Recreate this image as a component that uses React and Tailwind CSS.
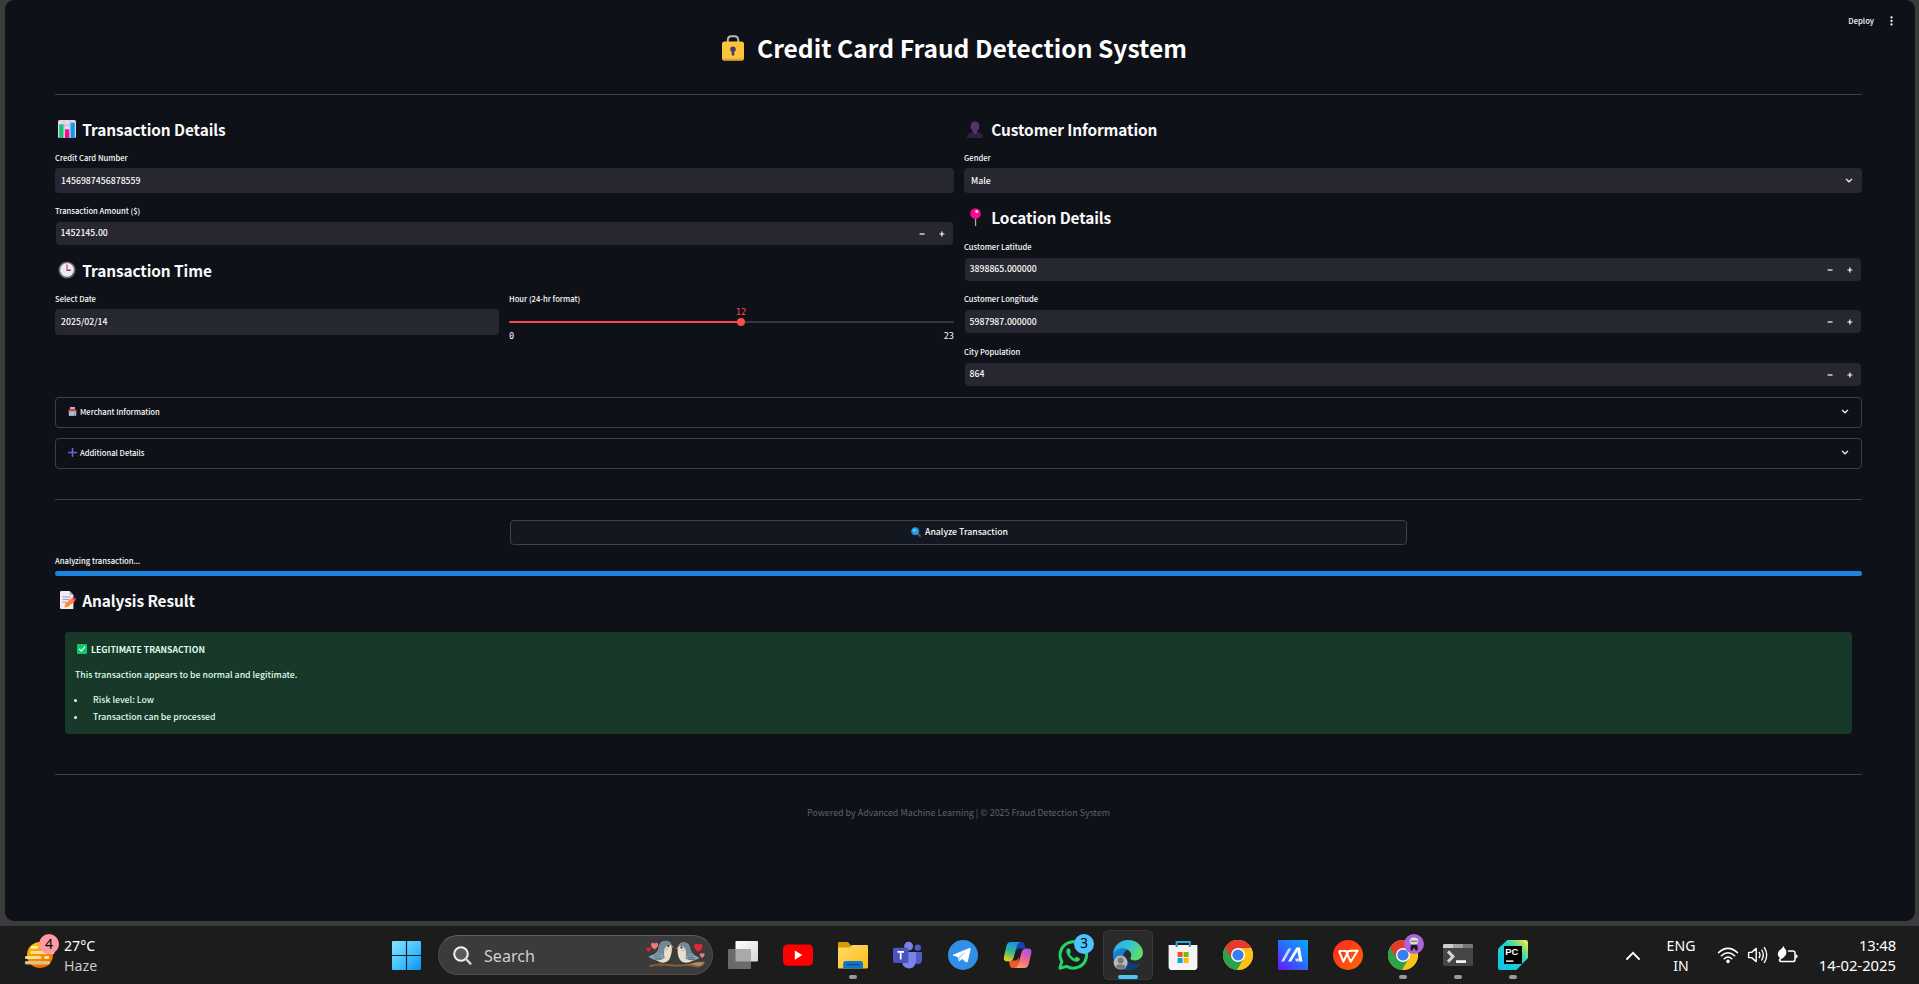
import React from "react";

const SANS = "font-['Noto_Sans_CJK_SC','Noto_Sans',sans-serif]";
const UI = "font-['Noto_Sans','Open_Sans',sans-serif]";

/* ---------- pictograms used in the page ---------- */

const LockIcon = () => (
  <svg className="w-[22px] h-[26px] shrink-0" viewBox="0 0 22 26">
    <path d="M5.8 9V5.2Q5.8 1.2 9.4 1.2H12.6Q16.2 1.2 16.2 5.2V9" fill="none" stroke="#b9b6be" strokeWidth="2" />
    <rect x="0" y="6.5" width="22" height="19" rx="2.6" fill="#fcc33c" />
    <rect x="1" y="23.5" width="20" height="2" rx="1" fill="#e0a63c" />
    <circle cx="11" cy="14.2" r="2.7" fill="#433b6b" />
    <rect x="9.7" y="14" width="2.6" height="6.6" rx="1.2" fill="#433b6b" />
  </svg>
);

const ChartIcon = () => (
  <svg className="w-[18px] h-[18px] shrink-0" viewBox="0 0 18 18">
    <rect x="0" y="0" width="18" height="18" rx="1.6" fill="#e5d9ee" />
    <path d="M0 5.4H18M0 10.2H18M6 0V18M12 0V18" stroke="#c2b4d2" strokeWidth="0.8" />
    <rect x="1.2" y="4.4" width="4.2" height="13.6" fill="#0fc46c" />
    <rect x="7" y="9.4" width="4.2" height="8.6" fill="#f70a8d" />
    <rect x="12.6" y="2.6" width="4.2" height="15.4" fill="#0a9cf0" />
  </svg>
);

const ClockIcon = () => (
  <svg className="w-[18px] h-[18px] shrink-0" viewBox="0 0 18 18">
    <circle cx="9" cy="9" r="8.6" fill="#6a6670" />
    <circle cx="9" cy="8.8" r="6.9" fill="#efeaf1" />
    <path d="M9 3.6V9.2" stroke="#ef3f78" strokeWidth="1.3" />
    <path d="M8.6 9.3H12.8" stroke="#5a5560" strokeWidth="1.5" />
  </svg>
);

const PersonIcon = () => (
  <svg className="w-[16px] h-[17px] shrink-0" viewBox="0 0 16 17">
    <path d="M0 17Q.2 11.4 5.4 11.2L8 13L10.6 11.2Q15.8 11.4 16 17Z" fill="#331f44" />
    <path d="M8 .4C5 .4 3.5 2.6 3.7 5.4C3.2 6 3.6 7.4 4.3 7.7C4.7 9.4 5.4 10.2 6 10.7V12L8 13.6L10 12V10.7C10.6 10.2 11.3 9.4 11.7 7.7C12.4 7.4 12.8 6 12.3 5.4C12.5 2.6 11 .4 8 .4Z" fill="#52346b" />
  </svg>
);

const PinIcon = () => (
  <svg className="w-[11px] h-[18px] shrink-0" viewBox="0 0 11 18">
    <rect x="4.9" y="9" width="1.3" height="9" fill="#a8a3ad" />
    <circle cx="5.5" cy="5.5" r="5.3" fill="#f70a8d" />
    <ellipse cx="6.8" cy="3.5" rx="1.6" ry="1.5" fill="#ffd3ea" />
  </svg>
);

const MemoIcon = () => (
  <svg className="w-[16px] h-[18px] shrink-0" viewBox="0 0 16 18">
    <path d="M1.2 0H9.6L13.4 4V18H1.2Q0 18 0 16.8V1.2Q0 0 1.2 0Z" fill="#f2eaf5" />
    <path d="M9.6 0V4H13.4Z" fill="#b8a8cc" />
    <path d="M2.6 6H10.6M2.6 8.6H9.6M2.6 11.2H6.8" stroke="#a493bd" strokeWidth="1" />
    <path d="M4.4 16.4L5.4 12.6L12 6.9L15 10L8.2 15.8Z" fill="#ff8a2b" />
    <path d="M12 6.9L13.3 5.9Q16.4 6.4 16 9.1L15 10Z" fill="#f0277d" />
  </svg>
);

const StoreIcon = () => (
  <svg className="w-[9px] h-[9px] shrink-0" viewBox="0 0 9 9">
    <rect x="2" y="0" width="5" height="2.4" fill="#b9b3c2" />
    <rect x=".8" y="4" width="7.4" height="4.8" fill="#b7cbe0" />
    <path d="M1 2.2H8L9 4.5H0Z" fill="#e2453f" />
    <rect x="1.6" y="5.8" width="3" height="1.6" fill="#8fbbe0" />
    <rect x="5.8" y="5.8" width="1.4" height="3" fill="#8e8aa6" />
  </svg>
);

const PlusEmoji = () => (
  <svg className="w-[9px] h-[9px] shrink-0" viewBox="0 0 9 9">
    <path d="M4.5 .4V8.6M.4 4.5H8.6" stroke="#7a5bd0" strokeWidth="1.6" strokeLinecap="round" />
  </svg>
);

const LensIcon = () => (
  <svg className="w-[10px] h-[10px] shrink-0" viewBox="0 0 10 10">
    <path d="M6 6L9 9" stroke="#5d4a86" strokeWidth="1.9" strokeLinecap="round" />
    <circle cx="4.2" cy="4.2" r="3.7" fill="#1aa6f2" stroke="#3c6fae" strokeWidth=".9" />
    <circle cx="3.2" cy="3.2" r="1" fill="#8fdcff" />
  </svg>
);

const CheckEmoji = () => (
  <svg className="w-[10px] h-[10px] shrink-0" viewBox="0 0 10 10">
    <rect width="10" height="10" rx="1.2" fill="#0fc968" />
    <path d="M2.3 5.2L4.2 7.2L7.8 2.8" fill="none" stroke="#fff" strokeWidth="1.2" strokeLinecap="round" strokeLinejoin="round" />
  </svg>
);

const Chevron = () => (
  <svg className="w-[8px] h-[5px] shrink-0" viewBox="0 0 8 5">
    <path d="M1 .9L4 3.8L7 .9" fill="none" stroke="#fafafa" strokeWidth="1.25" />
  </svg>
);

/* ---------- form pieces ---------- */

const Heading = ({ icon, className = "", children }) => (
  <div className={"flex items-center h-6 " + className}>
    <span className="flex w-[27.3px] justify-start">{icon}</span>
    <h3 className="text-[15.4px] leading-6 font-bold tracking-[-0.006em] text-[#fafafa] whitespace-nowrap">{children}</h3>
  </div>
);

const Label = ({ className = "", children }) => (
  <div className={"h-[14px] leading-[14px] text-[7.64px] font-medium text-[#fafafa] whitespace-nowrap " + className}>{children}</div>
);

const NumberInput = ({ className = "", value, pad = "pb-[2px]" }) => (
  <div className={"flex items-center h-[23px] mx-px rounded-[4px] bg-[#262730] pl-[4.5px] pr-[8px] " + className}>
    <span className={"text-[8.73px] leading-[12px] font-medium text-[#fafafa] " + pad}>{value}</span>
    <svg className="ml-auto w-[26px] h-[6px]" viewBox="0 0 26 6">
      <path d="M.6 3H5.6" stroke="#fafafa" strokeWidth="1.2" />
      <path d="M20.4 3H25.4M22.9 .5V5.5" stroke="#fafafa" strokeWidth="1.2" />
    </svg>
  </div>
);

const Rule = ({ className = "" }) => <div className={"h-px bg-[#3d4044] " + className} />;

const Expander = ({ icon, className = "", children }) => (
  <div className={"flex items-center h-[31px] rounded-[4px] border border-[#3d4044] pl-[12px] pr-[12px] pb-[2px] " + className}>
    {icon}
    <span className="ml-[3px] text-[7.64px] leading-[12px] font-medium text-[#fafafa]">{children}</span>
    <span className="ml-auto">
      <Chevron />
    </span>
  </div>
);

/* ---------- taskbar icons ---------- */

const WindowsLogo = () => (
  <svg className="w-[29px] h-[29px]" viewBox="0 0 29 29">
    <defs>
      <linearGradient id="win" x1="0" y1="0" x2="1" y2="1">
        <stop offset="0" stopColor="#8be2ff" />
        <stop offset=".5" stopColor="#45c6ff" />
        <stop offset="1" stopColor="#0b90f5" />
      </linearGradient>
    </defs>
    <path d="M1 0H13.9V13.9H0V1Q0 0 1 0ZM15.1 0H28Q29 0 29 1V13.9H15.1ZM0 15.1H13.9V29H1Q0 29 0 28ZM15.1 15.1H29V28Q29 29 28 29H15.1Z" fill="url(#win)" />
  </svg>
);

const Heart = ({ x, y, s, fill }) => (
  <path transform={`translate(${x} ${y}) scale(${s})`} d="M0 3.4C-4.6 .4-3.4-3 -1.4-2.8C-.6-2.8 0-2 0-1.6C0-2 .6-2.8 1.4-2.8C3.4-3 4.6 .4 0 3.4Z" fill={fill} />
);

const Birds = () => (
  <svg className="w-[60px] h-[30px]" viewBox="0 0 60 30">
    <path d="M3 25.5Q12 22.6 26 24.4Q40 25.4 50 22L59 21.6Q58.4 26 52 27.4Q46 26.2 40 25.8Q30 27.2 20 25.4Q12 25 4 27Z" fill="#8d643f" />
    <path d="M44 24Q51 21.8 58 22.4L54 26Z" fill="#b98c5c" />
    <path d="M15 22L8 26M20 24L14 27M33 24L29 27" stroke="#75502f" strokeWidth="1" />
    <path d="M12.6 9Q13 1 19.6 1Q25.6 1 25.8 7Q26.6 13 23 20Q19 24 14 22L3 17Q10 15 12.6 9Z" fill="#e6dfcd" />
    <path d="M12.8 8.4Q13.4 .8 19.6 .8Q24.8 .8 25.6 5.4Q20.6 4 18.4 9Q17.6 14 18.6 18Q12 23.4 2 16.4Q10.2 15 12.8 8.4Z" fill="#6f8998" />
    <path d="M8.6 14Q15 11 18 17Q12 22 3 16.6Z" fill="#8fa6b4" />
    <path d="M8.4 15.2L14.6 14.4M7.6 17L15.6 16.8M9.4 18.8L15 18.6" stroke="#4a6373" strokeWidth=".7" />
    <circle cx="22.4" cy="6" r="1" fill="#1c1c22" />
    <circle cx="20.8" cy="8.8" r="1.5" fill="#f3b3a5" />
    <path d="M25.4 5.4L27.8 7L25.4 8Z" fill="#d99545" />
    <path d="M44.4 10Q44 3 37.8 2.4Q32.4 2.4 32 8Q30.6 14 34 20Q37 24 44 22L53 18Q47 16 44.4 10Z" fill="#e6dfcd" />
    <path d="M44.4 9.6Q44 2.4 37.8 2.2Q33.2 2.2 32.2 6.4Q37 5 39.6 9.4Q40.4 15 39.6 18.4Q46 22.8 54 18Q47 16 44.4 9.6Z" fill="#6f8998" />
    <path d="M40 17Q42 12.4 48 15L53 18Q46 21 40 17Z" fill="#8fa6b4" />
    <path d="M41.6 15.4L47.6 16M42 17.4L49 17.8M43 19.2L48 19.2" stroke="#4a6373" strokeWidth=".7" />
    <circle cx="35.4" cy="7.4" r="1" fill="#1c1c22" />
    <circle cx="37" cy="10" r="1.5" fill="#f3b3a5" />
    <path d="M32.4 6.8L30 8.4L32.4 9.4Z" fill="#d99545" />
    <Heart x={8.6} y={5.8} s={1.1} fill="#f4787a" />
    <Heart x={2.6} y={9.4} s={0.7} fill="#e0262f" />
    <Heart x={52.4} y={7.4} s={1.3} fill="#e8252f" />
    <Heart x={56.2} y={15.4} s={0.75} fill="#f4787a" />
  </svg>
);

const TaskView = () => (
  <svg className="w-[30px] h-[30px]" viewBox="0 0 30 30">
    <defs>
      <linearGradient id="tv" x1="0" y1="0" x2="1" y2="1">
        <stop offset="0" stopColor="#fff" />
        <stop offset="1" stopColor="#d6d6d6" />
      </linearGradient>
    </defs>
    <rect x="7.5" y="1" width="22.5" height="20.5" rx="1" fill="url(#tv)" />
    <rect x="0" y="9" width="23" height="20" rx="1" fill="#6a6a6a" />
    <path d="M7.5 9H23V21.5H7.5Z" fill="#a9a9a9" />
  </svg>
);

const YouTube = () => (
  <svg className="w-[30px] h-[30px]" viewBox="0 0 30 30">
    <rect x="0" y="4.4" width="30" height="21.4" rx="4.6" fill="#fe0000" />
    <path d="M11.8 10.4V19.8L19.4 15.1Z" fill="#fff" />
  </svg>
);

const Folder = () => (
  <svg className="w-[30px] h-[30px]" viewBox="0 0 30 30">
    <defs>
      <linearGradient id="fo" x1="0" y1="0" x2="1" y2="1">
        <stop offset="0" stopColor="#ffdc6a" />
        <stop offset="1" stopColor="#ffb915" />
      </linearGradient>
    </defs>
    <path d="M0 3.2Q0 2 1.2 2H10L13 5.4H20V12H0Z" fill="#d99a08" />
    <path d="M0 7.4H11.6L14.4 5H29Q30 5 30 6V27.6Q30 28.6 29 28.6H1Q0 28.6 0 27.6Z" fill="url(#fo)" />
    <path d="M5.2 28.6V23.4Q5.2 21 7.6 21H22.6Q25 21 25 23.4V28.6Z" fill="#0f78c9" />
    <path d="M9 24.6H21" stroke="#0a4a84" strokeWidth="1.2" strokeLinecap="round" />
  </svg>
);

const Teams = () => (
  <svg className="w-[30px] h-[30px]" viewBox="0 0 30 30">
    <circle cx="24.8" cy="7.6" r="3.2" fill="#5059c9" />
    <path d="M20 12H29V19.4Q29 24 24.6 24Q21 24 20 21Z" fill="#5059c9" />
    <circle cx="15.6" cy="6.2" r="4.4" fill="#7b83eb" />
    <path d="M9 12H23V21.6Q22.4 28.4 15.6 28.4Q9.8 28 9 22Z" fill="#7b83eb" />
    <rect x="0" y="7.8" width="15.4" height="15.2" rx="1.4" fill="#4b53bc" />
    <path d="M4.4 11.8H11M7.7 11.8V19.4" stroke="#fff" strokeWidth="1.7" />
  </svg>
);

const Telegram = () => (
  <svg className="w-[30px] h-[30px]" viewBox="0 0 30 30">
    <circle cx="15" cy="15" r="15" fill="#318fe8" />
    <path d="M5 14.8L21.4 8Q22.8 7.6 22.6 9.2L19.8 21.6Q19.4 22.8 18.2 22.2L13.8 19L11.6 21.2Q11 21.6 10.8 20.8L9.6 16.9L5 15.6Q4.4 15.2 5 14.8Z" fill="#fff" />
    <path d="M10 17L18.8 11.2L12.4 17.8L11.4 21Z" fill="#b9d9f5" />
  </svg>
);

const Copilot = () => (
  <svg className="w-[30px] h-[30px]" viewBox="0 0 30 30">
    <defs>
      <linearGradient id="cpA" x1=".5" y1="0" x2=".2" y2="1">
        <stop offset="0" stopColor="#1b93e8" />
        <stop offset=".45" stopColor="#2fb594" />
        <stop offset="1" stopColor="#f5d000" />
      </linearGradient>
      <linearGradient id="cpB" x1=".7" y1="0" x2=".3" y2="1">
        <stop offset="0" stopColor="#a653f0" />
        <stop offset=".5" stopColor="#ef6292" />
        <stop offset="1" stopColor="#f9a35a" />
      </linearGradient>
    </defs>
    <path d="M13 2H18.6Q20.6 2 21.2 4L22.4 8.4H17Q13.4 8.4 12.4 12Z" fill="#1543b8" />
    <path d="M15.6 28H9.6Q7.4 28 7 26L5.8 20.6H12Q14.6 20.6 15.8 17Z" fill="#ee5a30" />
    <path d="M7.8 2H17.6Q14.8 2.6 14 5.6L10.6 17.8Q9.6 21.2 6.2 21.2H4Q0 21.2 1 16.4L3.4 6Q4.4 2 7.8 2Z" fill="url(#cpA)" />
    <path d="M21.4 28H11.6Q14.4 27.4 15.2 24.4L18.6 12.2Q19.6 8.6 23 8.6H25.4Q29.2 8.8 28.2 13.4L25.8 24Q24.8 28 21.4 28Z" fill="url(#cpB)" />
  </svg>
);

const WhatsApp = () => (
  <svg className="w-[30px] h-[30px]" viewBox="0 0 30 30">
    <path d="M1.9 28.2L3.8 21.4A13.2 13.2 0 1 1 8.7 26.4Z" fill="none" stroke="#25d366" strokeWidth="3" strokeLinejoin="round" />
    <path d="M10.8 8.2C9.4 8.2 8.2 9.8 8.3 11.4C8.5 15.6 13.8 21.4 18.6 21.7C20.4 21.8 22 20.4 22 19C22 18.4 19.2 16.8 18.5 16.8C17.7 16.8 17.2 18.4 16.5 18.4C15.4 18.2 12 14.8 11.8 13.9C11.8 13.2 13 12.6 12.9 11.9C12.8 11.2 12 8.4 10.8 8.2Z" fill="#25d366" />
  </svg>
);

const Edge = () => (
  <svg className="w-[30px] h-[30px]" viewBox="0 0 30 30">
    <defs>
      <linearGradient id="edA" x1="0" y1=".2" x2="1" y2=".6">
        <stop offset="0" stopColor="#2aa8ea" />
        <stop offset=".5" stopColor="#34c6d0" />
        <stop offset="1" stopColor="#62e05a" />
      </linearGradient>
      <linearGradient id="edB" x1="0" y1="0" x2="1" y2="1">
        <stop offset="0" stopColor="#1b8fdc" />
        <stop offset="1" stopColor="#0b4fa0" />
      </linearGradient>
    </defs>
    <path d="M0 16C-.4 6.6 6.4 0 15 0C24 0 30 6.4 30 12.6C30 17 26.6 20.4 22 20.4C18 20.4 16.6 18.8 17.6 17.4C19.4 14.6 17.6 9.4 11.6 9.2C5.4 9 .6 12 0 16Z" fill="url(#edA)" />
    <path d="M0 15C1.6 8.6 10 6.6 14.8 9.8C10.4 11.2 8.6 17 11.4 21.6C14.4 26 21 27 27.4 23.2C24.6 27.8 20 30 15 30C6.4 30 0 23.4 0 15Z" fill="url(#edB)" />
    <path d="M12.4 15C12.6 22 20 26.4 28 22.2C24.6 28 19.6 30 15 30C8 25.6 8 18.6 12.4 15Z" fill="#0d3f7c" />
    <circle cx="7.6" cy="22.6" r="7" fill="#b9b9b9" />
    <circle cx="7.6" cy="20.6" r="3" fill="#787878" />
    <path d="M2.6 26.8Q3.4 24.2 7.6 24.2Q11.8 24.2 12.6 26.8Q10.4 29 7.6 29Q4.8 29 2.6 26.8Z" fill="#787878" />
  </svg>
);

const Store = () => (
  <svg className="w-[30px] h-[30px]" viewBox="0 0 30 30">
    <path d="M8.6 7V2H21.8V7" fill="none" stroke="#25a9e0" strokeWidth="1.8" />
    <path d="M.6 5H29.4V26.4Q29.4 30 25.8 30H4.2Q.6 30 .6 26.4Z" fill="#f4f4f4" />
    <path d="M8.6 7V5M21.8 7V5" stroke="#1787c4" strokeWidth="1.8" />
    <rect x="9.6" y="12" width="5" height="5" fill="#f25022" />
    <rect x="15.6" y="12" width="5" height="5" fill="#7fba00" />
    <rect x="9.6" y="18" width="5" height="5" fill="#00a4ef" />
    <rect x="15.6" y="18" width="5" height="5" fill="#ffb900" />
  </svg>
);

const Chrome = () => (
  <svg className="w-[30px] h-[30px]" viewBox="0 0 30 30">
    <circle cx="15" cy="15" r="15" fill="#fbc116" />
    <path d="M15 15L21 18.4L14 30A15 15 0 0 1 2 7.5Z" fill="#2ba24c" />
    <path d="M2 7.5A15 15 0 0 1 28.2 8.1H15L8.8 18.4Z" fill="#e33b2e" />
    <path d="M15 8.1H28.2A15 15 0 0 1 14 30L21 18.4Z" fill="#fbc116" />
    <circle cx="15" cy="15" r="7" fill="#fff" />
    <circle cx="15" cy="15" r="5.6" fill="#3b7ded" />
  </svg>
);

const MyAsus = () => (
  <svg className="w-[30px] h-[30px]" viewBox="0 0 30 30">
    <defs>
      <linearGradient id="ma" x1="0" y1="1" x2="1" y2="0">
        <stop offset="0" stopColor="#6a14f5" />
        <stop offset=".5" stopColor="#2a6dfa" />
        <stop offset="1" stopColor="#0aa6fb" />
      </linearGradient>
    </defs>
    <rect width="30" height="30" fill="url(#ma)" />
    <path d="M3 21.6L10.4 8.4H13.4L6 21.6Z" fill="#c9dcff" />
    <path d="M10 21.6L18.4 7.6H21.6L13.2 21.6Z" fill="#fff" />
    <path d="M20.6 7.6H22L24.4 21.6H21.6L19.4 12Z" fill="#fff" />
    <path d="M17 18.4H21L21.6 21.6H18Z" fill="#c9dcff" />
  </svg>
);

const Wps = () => (
  <svg className="w-[30px] h-[30px]" viewBox="0 0 30 30">
    <defs>
      <linearGradient id="wps" x1="0" y1="0" x2="1" y2="1">
        <stop offset="0" stopColor="#ff2222" />
        <stop offset="1" stopColor="#ff6a00" />
      </linearGradient>
    </defs>
    <circle cx="15" cy="15" r="15" fill="url(#wps)" />
    <path d="M6 11H13L16.2 18.6M6 11L10.4 21.6L15.4 11H18.6M14.2 14.6L17.8 21.8L24.6 10.8H17.4" fill="none" stroke="#fff" strokeWidth="2" strokeLinejoin="round" />
  </svg>
);

const Terminal = () => (
  <svg className="w-[30px] h-[30px]" viewBox="0 0 30 30">
    <rect x="0" y="4" width="30" height="22" rx="1.6" fill="#464646" />
    <path d="M0 8V5.4Q0 4 1.4 4H10V8Z" fill="#cfcfcf" />
    <path d="M10 4H20V8H10Z" fill="#a0a0a0" />
    <path d="M20 4H28.6Q30 4 30 5.4V8H20Z" fill="#777" />
    <path d="M5 11.4L10 16.6L5 21.8" fill="none" stroke="#d2d2d2" strokeWidth="3" />
    <path d="M13 21.6H23" stroke="#f4f4f4" strokeWidth="2.8" />
  </svg>
);

const PyCharm = () => (
  <svg className="w-[30px] h-[30px]" viewBox="0 0 30 30">
    <defs>
      <linearGradient id="pc" x1="0" y1="1" x2="1" y2="0">
        <stop offset="0" stopColor="#07c3f2" />
        <stop offset=".6" stopColor="#21d7c4" />
        <stop offset=".82" stopColor="#9fe06a" />
        <stop offset="1" stopColor="#fcf84a" />
      </linearGradient>
    </defs>
    <path d="M9.4 0H27.6Q30 0 30 2.4V18L18.4 30H2Q0 30 0 28V10.4Q0 8.8 1 7.8Z" fill="url(#pc)" />
    <rect x="6" y="6" width="18" height="18" fill="#000" />
    <text x="7.2" y="15" fontSize="9.4" fontWeight="700" fill="#fff" fontFamily="Liberation Sans, sans-serif">PC</text>
    <rect x="8" y="20.4" width="7.4" height="1.4" fill="#fff" />
  </svg>
);

const Haze = () => (
  <svg className="w-[30px] h-[28px]" viewBox="0 0 30 28">
    <defs>
      <linearGradient id="hz" x1=".3" y1="0" x2=".7" y2="1">
        <stop offset="0" stopColor="#ffc400" />
        <stop offset="1" stopColor="#ef6100" />
      </linearGradient>
    </defs>
    <circle cx="15" cy="14" r="13" fill="url(#hz)" />
    <path d="M6.6 11.6H28M1.4 16.6H15M20.4 16.6H23M1.4 21.8H23.6" stroke="#f7dc9e" strokeWidth="3" strokeLinecap="round" />
    <path d="M1.4 21.8H23.6" stroke="#dfc07e" strokeWidth="3" strokeLinecap="round" />
    <path d="M7 6.4H12" stroke="#ffe9b0" strokeWidth="2.6" strokeLinecap="round" />
  </svg>
);

const TaskItem = ({ children, running, active, badge }) => (
  <div className="relative flex h-[58px] w-[30px] items-center justify-center">
    {active && <div className="absolute -left-[10px] top-[4px] h-[50px] w-[50px] rounded-[5px] border border-[#383838] bg-[#2a2a2a]" />}
    <div className="relative">{children}</div>
    {badge}
    {running && <div className="absolute left-[11px] top-[49px] h-[4px] w-[8px] rounded-full bg-[#9a9a9a]" />}
    {active && <div className="absolute left-[5px] top-[49px] h-[4px] w-[20px] rounded-full bg-[#4cc2ff]" />}
  </div>
);

const Taskbar = () => (
  <footer className={"flex h-[58px] w-full items-center bg-[#1c1c1c] text-[#fff] " + UI}>
    <div className="flex w-[392px] items-center pl-[25px]">
      <div className="relative">
        <Haze />
        <div className="absolute left-[14px] -top-[7px] flex h-5 w-5 items-center justify-center rounded-full bg-[#ff99a4] text-[14px] leading-none text-black">4</div>
      </div>
      <div className="ml-[9px] pt-[1px] text-[14.2px] leading-[20px]">
        <div>27°C</div>
        <div className="text-[#c9c9c9]">Haze</div>
      </div>
    </div>
    <WindowsLogo />
    <div className="ml-[17px] flex h-10 w-[275px] items-center rounded-full border border-[#4c4c4c] border-t-[#606060] bg-[#3b3b3b] pl-[14px] pr-[6px]">
      <svg className="h-[19px] w-[19px]" viewBox="0 0 19 19">
        <circle cx="8" cy="8" r="6.8" fill="#5a5a5a" stroke="#f0f0f0" strokeWidth="2" />
        <path d="M13 13L17.4 17.6" stroke="#d8d8d8" strokeWidth="2.4" strokeLinecap="round" />
      </svg>
      <span className="ml-[12px] pt-[2px] text-[16.1px] leading-5 text-[#cfcfcf]">Search</span>
      <span className="ml-auto">
        <Birds />
      </span>
    </div>
    <div className="ml-[15px] flex gap-[25px]">
      <TaskItem><TaskView /></TaskItem>
      <TaskItem><YouTube /></TaskItem>
      <TaskItem running><Folder /></TaskItem>
      <TaskItem><Teams /></TaskItem>
      <TaskItem><Telegram /></TaskItem>
      <TaskItem><Copilot /></TaskItem>
      <TaskItem
        badge={<div className="absolute left-[16px] top-[8px] flex h-5 w-5 items-center justify-center rounded-full bg-[#4cc2ff] text-[13.5px] leading-none text-black">3</div>}
      >
        <WhatsApp />
      </TaskItem>
      <TaskItem active><Edge /></TaskItem>
      <TaskItem><Store /></TaskItem>
      <TaskItem><Chrome /></TaskItem>
      <TaskItem><MyAsus /></TaskItem>
      <TaskItem><Wps /></TaskItem>
      <TaskItem
        running
        badge={
          <svg className="absolute left-[16px] top-[8px] h-5 w-5" viewBox="0 0 20 20">
            <circle cx="10" cy="10" r="10" fill="#a965d8" />
            <path d="M6.6 16.4V12.6Q6.8 10.4 10 10.4Q13.4 10.4 13.6 12.6V16.4H11.6L10 13.6L8.4 16.4Z" fill="#1b1b20" />
            <ellipse cx="10" cy="7" rx="4.4" ry="3.6" fill="#dcdcdc" />
            <path d="M6.8 7.4Q8.4 6.6 10 7.6Q11.6 6.6 13.2 7.4" fill="none" stroke="#666" strokeWidth="1.1" />
          </svg>
        }
      >
        <Chrome />
      </TaskItem>
      <TaskItem running><Terminal /></TaskItem>
      <TaskItem running><PyCharm /></TaskItem>
    </div>
    <div className="ml-auto flex items-center pr-[23px]">
      <svg className="h-[9px] w-[14px]" viewBox="0 0 14 9">
        <path d="M1 8L7 1.8L13 8" fill="none" stroke="#fff" strokeWidth="1.8" strokeLinecap="round" />
      </svg>
      <div className="ml-[26px] w-[30px] pt-[1px] text-center text-[14.1px] leading-[20px]">
        <div>ENG</div>
        <div>IN</div>
      </div>
      <svg className="ml-[21px] h-[18px] w-[22px]" viewBox="0 0 22 18">
        <path d="M1.6 6.6Q11-1.8 20.4 6.6M4.4 9.8Q11 3.8 17.6 9.8M7.2 12.8Q11 9.2 14.8 12.8" fill="none" stroke="#fff" strokeWidth="1.5" strokeLinecap="round" />
        <circle cx="11" cy="15.4" r="1.8" fill="#fff" />
      </svg>
      <svg className="ml-[8px] h-[18px] w-[22px]" viewBox="0 0 22 18">
        <path d="M1.6 6.4H4.6L9.2 2.4V15.6L4.6 11.6H1.6Z" fill="none" stroke="#fff" strokeWidth="1.4" strokeLinejoin="round" />
        <path d="M12.2 6.4Q13.8 9 12.2 11.6M14.8 4Q17.8 9 14.8 14M17.4 1.6Q22 9 17.4 16.4" fill="none" stroke="#fff" strokeWidth="1.4" strokeLinecap="round" />
      </svg>
      <svg className="ml-[8px] h-[18px] w-[22px]" viewBox="0 0 22 18">
        <path d="M11 5H15.8Q18 5 18 7.2V13.4Q18 15.6 15.8 15.6H4.6Q2.6 15.6 2.4 13.6" fill="none" stroke="#fff" strokeWidth="1.5" />
        <path d="M18.4 8.2Q20.6 8.4 20.6 10.3Q20.6 12.2 18.4 12.4Z" fill="#fff" />
        <path d="M6.8 0Q6.8 2.2 9 4Q10.6 8.6 6.6 11.6L2.2 14.4L1.6 13.8L3 12Q-1 9 2.2 4.6Q4.6 3 6.8 0Z" fill="#fff" />
      </svg>
      <div className="w-[97px] text-right text-[14.8px] leading-[20px]">
        <div className="tracking-[-0.01em]">13:48</div>
        <div>14-02-2025</div>
      </div>
    </div>
  </footer>
);

/* ---------- page ---------- */

export default function App() {
  return (
    <div className="flex h-[984px] w-[1919px] flex-col overflow-hidden bg-[#3b3b3b]">
      <div className="h-[926px] pl-[5px] pr-[4px] pb-[5px]">
        <main className={"relative h-[921px] rounded-[9px] bg-[#0e1117] pl-[50px] pr-[53px] pt-[34px] text-[#fafafa] " + SANS}>
          <div className="absolute right-[22px] top-[14px] flex h-[14px] items-center">
            <span className="text-[7.68px] font-medium leading-[14px]">Deploy</span>
            <svg className="ml-[16px] h-[10px] w-[3px]" viewBox="0 0 3 10">
              <circle cx="1.5" cy="1.4" r="1.15" fill="#fafafa" />
              <circle cx="1.5" cy="4.9" r="1.15" fill="#fafafa" />
              <circle cx="1.5" cy="8.4" r="1.15" fill="#fafafa" />
            </svg>
          </div>

          <header className="flex h-[28px] items-center justify-center gap-[13px] pr-[8px]">
            <LockIcon />
            <h1 className="pb-[2px] text-[24.6px] font-bold leading-[26px] text-white">Credit Card Fraud Detection System</h1>
          </header>

          <Rule className="mt-[32px]" />

          <div className="grid grid-cols-[899px_898px] gap-x-[10px] h-[291px]">
            <section>
              <Heading icon={<span className="ml-[3px]"><ChartIcon /></span>} className="mt-[22px]">Transaction Details</Heading>
              <Label className="mt-[10px]">Credit Card Number</Label>
              <div className="mt-[3px] flex h-[25px] items-center rounded-[4px] bg-[#262730] pl-[6px] text-[8.73px] font-medium leading-[12px]">1456987456878559</div>
              <Label className="mt-[11px]">Transaction Amount ($)</Label>
              <NumberInput className="mt-[4px]" value="1452145.00" />
              <Heading icon={<span className="ml-[3px]"><ClockIcon /></span>} className="mt-[13px]">Transaction Time</Heading>
              <div className="mt-[10px] grid grid-cols-[444px_445px] gap-x-[10px]">
                <div>
                  <Label>Select Date</Label>
                  <div className="mt-[3px] flex h-[26px] items-center rounded-[4px] bg-[#262730] pl-[6px] text-[8.73px] font-medium leading-[12px]">2025/02/14</div>
                </div>
                <div>
                  <Label>Hour (24-hr format)</Label>
                  <div className="relative mt-[15px] h-[2px] rounded-full bg-[#35373f]">
                    <div className="h-[2px] w-[232px] rounded-full bg-[#ff4b4b]" />
                    <div className="absolute left-[228px] -top-[3px] h-2 w-2 rounded-full bg-[#ff4b4b]" />
                    <div className="absolute left-[222px] -top-[14px] w-5 text-center font-['DejaVu_Sans_Mono',monospace] text-[8.6px] leading-[10px] text-[#ff4b4b]">12</div>
                  </div>
                  <div className="mt-[8px] flex justify-between font-['DejaVu_Sans_Mono',monospace] text-[8.6px] leading-[10px]">
                    <span>0</span>
                    <span>23</span>
                  </div>
                </div>
              </div>
            </section>

            <section>
              <Heading icon={<span className="ml-[3px]"><PersonIcon /></span>} className="mt-[22px]">Customer Information</Heading>
              <Label className="mt-[10px]">Gender</Label>
              <div className="mt-[3px] flex h-[25px] items-center rounded-[4px] bg-[#262730] pl-[7px] pr-[9.5px] text-[8.73px] font-medium leading-[12px]">
                Male
                <span className="ml-auto"><Chevron /></span>
              </div>
              <Heading icon={<span className="ml-[6px]"><PinIcon /></span>} className="mt-[12px]">Location Details</Heading>
              <Label className="mt-[11px]">Customer Latitude</Label>
              <NumberInput className="mt-[4px]" value="3898865.000000" />
              <Label className="mt-[11px]">Customer Longitude</Label>
              <NumberInput className="mt-[4px]" pad="pb-0" value="5987987.000000" />
              <Label className="mt-[12px]">City Population</Label>
              <NumberInput className="mt-[4px]" value="864" />
            </section>
          </div>

          <Expander icon={<StoreIcon />} className="mt-[11px]">Merchant Information</Expander>
          <Expander icon={<PlusEmoji />} className="mt-[10px]">Additional Details</Expander>

          <Rule className="mt-[30px]" />

          <button className="ml-[455px] mt-[20px] flex h-[25px] w-[897px] items-center justify-center gap-[4px] rounded-[4px] border border-[#3f4247] bg-[#131720] pb-[2px] pl-[2px] text-[8.73px] font-medium leading-[12px]">
            <LensIcon />
            Analyze Transaction
          </button>

          <Label className="mt-[9px]">Analyzing transaction...</Label>
          <div className="mt-[3px] h-[5px] rounded-full bg-[#1c83e1]" />

          <Heading icon={<span className="ml-[5px]"><MemoIcon /></span>} className="mt-[12px]">Analysis Result</Heading>

          <div className="mx-[10px] mt-[20px] h-[102px] rounded-[4px] bg-[#183929] pl-[10px] pt-[11px] text-[8.73px] font-medium leading-[12px] text-[#dffde9]">
            <div className="flex items-center gap-[4px] pl-[2px] font-bold text-[8.68px]">
              <CheckEmoji />
              LEGITIMATE TRANSACTION
            </div>
            <p className="mt-[14px]">This transaction appears to be normal and legitimate.</p>
            <ul className="mt-[13px] flex flex-col gap-[5px]">
              <li className="flex items-center">
                <span className="ml-[-1px] mr-[16px] h-[3px] w-[3px] rounded-full bg-[#dffde9]" />
                Risk level: Low
              </li>
              <li className="flex items-center">
                <span className="ml-[-1px] mr-[16px] h-[3px] w-[3px] rounded-full bg-[#dffde9]" />
                Transaction can be processed
              </li>
            </ul>
          </div>

          <Rule className="mt-[40px]" />
          <p className="mt-[32px] text-center text-[8.94px] leading-[12px] text-[#606164]">Powered by Advanced Machine Learning | © 2025 Fraud Detection System</p>
        </main>
      </div>
      <Taskbar />
    </div>
  );
}
